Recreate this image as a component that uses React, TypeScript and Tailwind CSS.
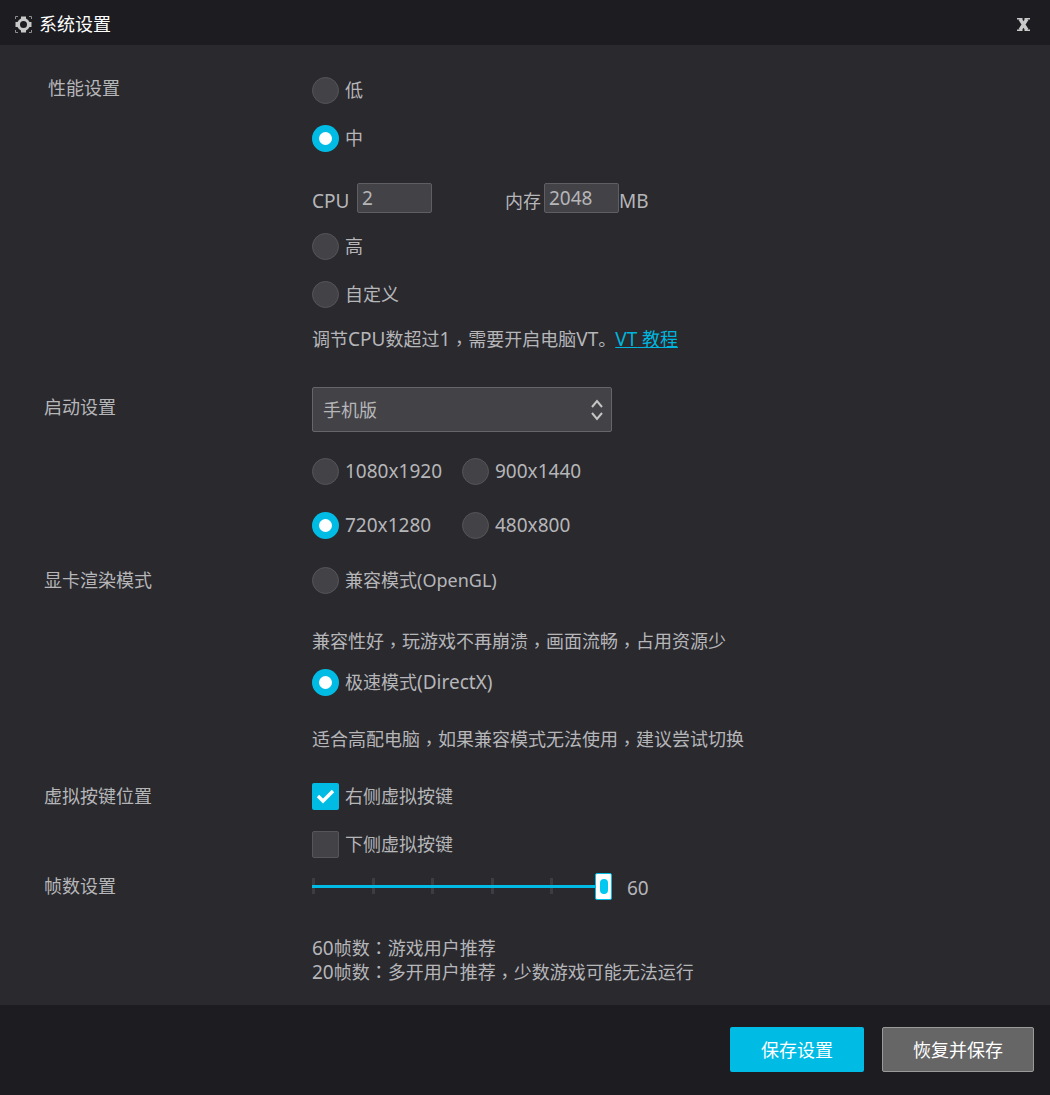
import React from 'react'

// latin runs are a bit wider than CJK body text in the original font
function L({children}: {children: React.ReactNode}) {
  return <span className="text-[19px]">{children}</span>
}

// the original centres full width punctuation in its box
function Comma() {
  return <span className="inline-block translate-y-[4px] font-['Noto_Sans_CJK_TC']">，</span>
}

function Colon() {
  return <span className="font-['Noto_Sans_CJK_TC']">：</span>
}

function Radio({label, checked}: {label: React.ReactNode; checked?: boolean}) {
  return (
    <div className="flex items-center">
      {checked ? (
        <span className="flex items-center justify-center w-[27px] h-[27px] rounded-full bg-[#00bce4] shrink-0">
          <span className="w-[13px] h-[13px] rounded-full bg-white"></span>
        </span>
      ) : (
        <span className="w-[27px] h-[27px] rounded-full bg-[#434347] border border-[#56565a] shrink-0"></span>
      )}
      <span className="ml-[6px]">{label}</span>
    </div>
  )
}

function Check({label, checked}: {label: string; checked?: boolean}) {
  return (
    <div className="flex items-center">
      {checked ? (
        <span className="flex items-center justify-center w-[27px] h-[27px] rounded-[2px] bg-[#00bce4] shrink-0">
          <svg width="19" height="15" viewBox="0 0 19 15" fill="none" stroke="#fff" strokeWidth="3.4">
            <path d="M2 7l5 5 10-10" />
          </svg>
        </span>
      ) : (
        <span className="w-[27px] h-[27px] rounded-[2px] bg-[#434347] border border-[#56565a] shrink-0"></span>
      )}
      <span className="ml-[6px]">{label}</span>
    </div>
  )
}

function Label({children, className}: {children: React.ReactNode; className?: string}) {
  return <div className={`absolute left-[44px] ${className ?? ''}`}>{children}</div>
}

const ticks = [0, 1, 2, 3, 4]

export default function App() {
  return (
    <div className="w-[1050px] h-[1095px] flex flex-col bg-[#29292e] text-[#b6b6b9] text-[18px] leading-[24px] font-['Noto_Sans','Noto_Sans_CJK_SC',sans-serif]">
      <header className="h-[45px] shrink-0 bg-[#1c1c21] flex items-center pt-[3px] pl-[15px] pr-[20px] text-white">
        <svg width="17" height="17" viewBox="0 0 17 17" fill="none" className="shrink-0">
          <circle cx="8.500" cy="8.500" r="5" stroke="#c8c8c8" strokeWidth="3" />
          <path d="M6 .5h5v3H6zM6 13.500h5v3H6zM.5 6h3v5h-3zM13.500 6h3v5h-3z" fill="#c8c8c8" />
          <path d="M.5 3v-2.500H3M14 .5h2.500V3M16.500 14v2.500H14M3 16.500H.5V14" stroke="#8e8e8e" strokeWidth="1" />
        </svg>
        <span className="ml-[7px]">系统设置</span>
        <svg width="13" height="13" viewBox="0 0 13 13" fill="none" className="ml-auto shrink-0">
          <path d="M3 1l7 11M10 1L3 12" stroke="#c9c9c9" strokeWidth="3.400" />
          <path d="M0 0h5.500v1.500H0zM7.500 0H13v1.500H7.500zM0 11.500h5.500V13H0zM7.500 11.500H13V13H7.500z" fill="#c9c9c9" />
        </svg>
      </header>

      <main className="flex-1 relative pt-[21px] pl-[312px]">
        <Label className="!left-[48px] top-[31px]">性能设置</Label>
        <div className="h-[48px] flex items-center"><Radio label="低" /></div>
        <div className="h-[48px] flex items-center"><Radio label="中" checked /></div>
        <div className="h-[60px] flex items-end pb-[9px]">
          <span className="w-[45px]"><L>CPU</L></span>
          <span className="w-[75px] h-[30px] pl-[4px] leading-[28px] bg-[#434347] border border-[#5f5f63] rounded-[2px]"><L>2</L></span>
          <span className="ml-[73px] w-[39px]">内存</span>
          <span className="w-[75px] h-[30px] pl-[4px] leading-[28px] bg-[#434347] border border-[#5f5f63] rounded-[2px]"><L>2048</L></span>
          <span><L>MB</L></span>
        </div>
        <div className="h-[48px] flex items-center"><Radio label="高" /></div>
        <div className="h-[48px] flex items-center"><Radio label="自定义" /></div>
        <div className="h-[42px] flex items-center pb-[2px]">
          <span>
            调节<L>CPU</L>数超过<L>1</L><Comma />需要开启电脑<L>VT</L>。<a className="-ml-[1px] text-[#00b5dd] underline"><L>VT</L> 教程</a>
          </span>
        </div>

        <Label className="top-[350px]">启动设置</Label>
        <div className="mt-[27px] w-[300px] h-[45px] flex items-center justify-between pl-[10px] pr-[7px] bg-[#434347] border border-[#66666a] rounded-[2px]">
          <span>手机版</span>
          <svg width="14" height="24" viewBox="0 0 14 24" fill="none" stroke="#c4c4c4" strokeWidth="2">
            <path d="M2 9l5-6 5 6M2 15l5 6 5-6" />
          </svg>
        </div>
        <div className="mt-[12px] h-[54px] flex items-center">
          <div className="w-[150px]"><Radio label={<L>1080x1920</L>} /></div>
          <Radio label={<L>900x1440</L>} />
        </div>
        <div className="h-[54px] flex items-center">
          <div className="w-[150px]"><Radio label={<L>720x1280</L>} checked /></div>
          <Radio label={<L>480x800</L>} />
        </div>

        <Label className="top-[523px]">显卡渲染模式</Label>
        <div className="h-[56px] flex items-center"><Radio label="兼容模式(OpenGL)" /></div>
        <div className="mt-[12px] h-[42px] flex items-center pb-[2px]">
          <span>兼容性好<Comma />玩游戏不再崩溃<Comma />画面流畅<Comma />占用资源少</span>
        </div>
        <div className="h-[40px] flex items-center"><Radio label={<>极速模式<L>(DirectX)</L></>} checked /></div>
        <div className="mt-[16px] h-[42px] flex items-center pb-[2px]">
          <span>适合高配电脑<Comma />如果兼容模式无法使用<Comma />建议尝试切换</span>
        </div>

        <Label className="top-[739px]">虚拟按键位置</Label>
        <div className="mt-[12px] h-[48px] flex items-center"><Check label="右侧虚拟按键" checked /></div>
        <div className="h-[48px] flex items-center"><Check label="下侧虚拟按键" /></div>

        <Label className="top-[829px]">帧数设置</Label>
        <div className="h-[36px] flex items-center">
          <div className="relative w-[300px] h-[20px]">
            {/* ticks, track and thumb sit on top of each other */}
            <div className="absolute left-0 top-[2px] w-[241px] flex justify-between">
              {ticks.map((t) => (
                <span key={t} className="w-[3px] h-[16px] bg-[#3c3c42]"></span>
              ))}
            </div>
            <div className="absolute left-0 top-[9px] w-[284px] h-[3px] bg-[#00bce4]"></div>
            <div className="absolute left-[283px] top-[-3px] w-[17px] h-[27px] flex items-center justify-center bg-white border border-[#00bce4] rounded-[2px]">
              <span className="w-[8px] h-[15px] rounded-[4px] bg-[#00c8f0]"></span>
            </div>
          </div>
          <span className="ml-[15px] mt-[3px]"><L>60</L></span>
        </div>
        <div className="mt-[31px] h-[24px]"><L>60</L>帧数<Colon />游戏用户推荐</div>
        <div className="h-[24px]"><L>20</L>帧数<Colon />多开用户推荐<Comma />少数游戏可能无法运行</div>
      </main>

      <footer className="h-[90px] shrink-0 bg-[#1c1c21] flex items-start justify-end pt-[22px] pr-[16px] gap-[18px] text-white">
        <button className="w-[134px] h-[45px] bg-[#00bce4] rounded-[2px]">保存设置</button>
        <button className="w-[152px] h-[45px] bg-[#666666] border border-[#9a9a9a] rounded-[2px]">恢复并保存</button>
      </footer>
    </div>
  )
}
